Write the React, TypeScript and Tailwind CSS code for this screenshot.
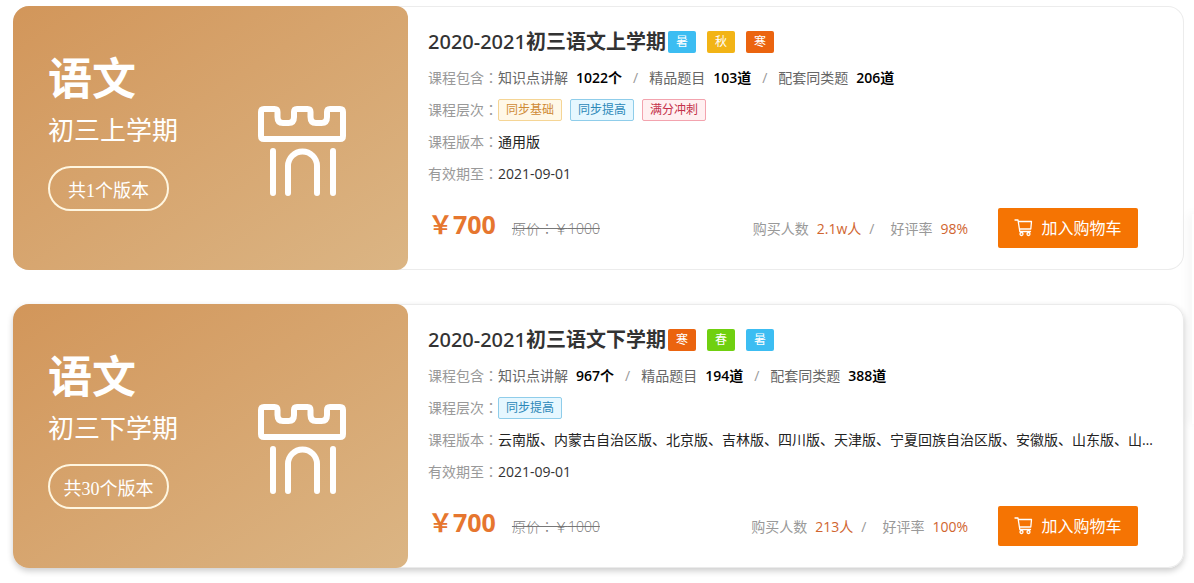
/**
 * @file Course list page
 */

/**
 * Season tag
 */
type Season = "spring" | "summer" | "autumn" | "winter";

/**
 * Course level
 */
type Level = "basic" | "improve" | "sprint";

/**
 * Course
 */
interface Course {
  id: number;
  subject: string;
  term: string;
  versionCount: number;
  year: string;
  title: string;
  seasons: Season[];
  contents: {name: string; count: string}[];
  levels: Level[];
  versions: string;
  expires: string;
  price: number;
  originalPrice: number;
  buyers: string;
  rating: string;
  raised: boolean;
}

/**
 * Season labels and colors
 */
const SEASONS: Record<Season, {label: string; className: string}> = {
  spring: {label: "春", className: "bg-[#70d010]"},
  summer: {label: "暑", className: "bg-[#3cbdf2]"},
  autumn: {label: "秋", className: "bg-[#f2b416]"},
  winter: {label: "寒", className: "bg-[#eb640f]"},
};

/**
 * Level labels and colors
 */
const LEVELS: Record<Level, {label: string; className: string}> = {
  basic: {
    label: "同步基础",
    className: "border-[#f5d595] bg-[#fff8e8] text-[#cf8a35]",
  },
  improve: {
    label: "同步提高",
    className: "border-[#8fcdea] bg-[#e6f7ff] text-[#2b87b8]",
  },
  sprint: {
    label: "满分冲刺",
    className: "border-[#f3a3ae] bg-[#fff0f1] text-[#c4304a]",
  },
};

const COURSES: Course[] = [
  {
    id: 1,
    subject: "语文",
    term: "初三上学期",
    versionCount: 1,
    year: "2020-2021",
    title: "初三语文上学期",
    seasons: ["summer", "autumn", "winter"],
    contents: [
      {name: "知识点讲解", count: "1022个"},
      {name: "精品题目", count: "103道"},
      {name: "配套同类题", count: "206道"},
    ],
    levels: ["basic", "improve", "sprint"],
    versions: "通用版",
    expires: "2021-09-01",
    price: 700,
    originalPrice: 1000,
    buyers: "2.1w人",
    rating: "98%",
    raised: false,
  },
  {
    id: 2,
    subject: "语文",
    term: "初三下学期",
    versionCount: 30,
    year: "2020-2021",
    title: "初三语文下学期",
    seasons: ["winter", "spring", "summer"],
    contents: [
      {name: "知识点讲解", count: "967个"},
      {name: "精品题目", count: "194道"},
      {name: "配套同类题", count: "388道"},
    ],
    levels: ["improve"],
    versions:
      "云南版、内蒙古自治区版、北京版、吉林版、四川版、天津版、宁夏回族自治区版、安徽版、山东版、山西版、广东版",
    expires: "2021-09-01",
    price: 700,
    originalPrice: 1000,
    buyers: "213人",
    rating: "100%",
    raised: true,
  },
];

/**
 * Castle icon
 * @returns JSX
 */
const CastleIcon: React.FC = () => (
  <svg
    className="mt-[26px] h-[90px] w-[88px] shrink-0"
    viewBox="0 0 88 90"
    fill="none"
    stroke="currentColor"
    strokeWidth="6"
    strokeLinecap="round"
    strokeLinejoin="round"
    aria-hidden="true"
  >
    <path d="M6 3H16.500Q19.500 3 19.500 6V11Q19.500 17 25 17H30.500Q36 17 36 11V6Q36 3 39 3H49.500Q52.500 3 52.500 6V11Q52.500 17 58 17H63.500Q69 17 69 11V6Q69 3 72 3H82Q85 3 85 6V30Q85 33 82 33H6Q3 33 3 30V6Q3 3 6 3Z" />
    <path d="M15 45V87M75 45V87M30 87V60A14.500 14.500 0 0 1 59 60V87" />
  </svg>
);

/**
 * Shopping cart icon
 * @returns JSX
 */
const CartIcon: React.FC = () => (
  <svg
    className="h-[18px] w-[19px] shrink-0"
    viewBox="0 0 19 18"
    fill="none"
    stroke="currentColor"
    strokeWidth="1.3"
    strokeLinecap="round"
    strokeLinejoin="round"
    aria-hidden="true"
  >
    <path d="M1 1H4L5.800 12.500H16.500M4.300 2.500H17.500L16.800 10H5.400" />
    <circle cx="7.500" cy="15" r="1.500" />
    <circle cx="14.500" cy="15" r="1.500" />
  </svg>
);

/**
 * Labelled row of a course card
 * @returns JSX
 */
const Row: React.FC<{label: string; children: React.ReactNode}> = ({
  label,
  children,
}) => (
  <div className="flex h-8 items-center">
    <dt className="shrink-0 text-[#999]">
      {label}
      <span className="font-['Noto_Sans_CJK_TC',sans-serif] leading-none">
        ：
      </span>
    </dt>
    <dd className="flex min-w-0 items-center">{children}</dd>
  </div>
);

/**
 * Course card
 * @returns JSX
 */
const CourseCard: React.FC<{course: Course}> = ({course}) => (
  <article
    className={`flex rounded-2xl bg-white ${
      course.raised
        ? "shadow-[inset_0_0_0_1px_#ebebeb,0_3px_6px_rgba(0,0,0,0.2)]"
        : "shadow-[inset_0_0_0_1px_#ececec]"
    }`}
  >
    <div className="flex w-[395px] shrink-0 items-center justify-between rounded-l-2xl rounded-r-xl bg-linear-to-br from-[#d2965a] to-[#dbb584] pr-[62px] pl-[35px] text-white">
      <div className="self-start pt-11">
        <h2 className="text-[44px] leading-[56px] font-bold">
          {course.subject}
        </h2>
        <p className="mt-1 text-[26px] leading-10">{course.term}</p>
        <p className="mt-4 flex h-[45px] w-[121px] items-center justify-center rounded-full border-2 border-[#fff6e0] pt-1 font-['Liberation_Serif','Noto_Sans_CJK_SC',serif] text-lg">
          共{course.versionCount}个版本
        </p>
      </div>
      <CastleIcon />
    </div>

    <div className="min-w-0 flex-1 pt-5 pr-[30px] pb-[22px] pl-5 text-sm">
      <div className="flex h-8 items-center">
        <h3 className="mr-0.5 text-xl leading-8 font-bold text-[#333]">
          <span className="font-['Noto_Sans'] font-medium">{course.year}</span>
          {course.title}
        </h3>
        <div className="flex gap-[11px]">
          {course.seasons.map(season => (
            <span
              key={season}
              className={`flex h-[22px] w-7 items-center justify-center rounded-xs text-xs text-white ${SEASONS[season].className}`}
            >
              {SEASONS[season].label}
            </span>
          ))}
        </div>
      </div>

      <dl className="mt-1">
        <Row label="课程包含">
          {course.contents.map((item, index) => (
            <span key={item.name} className="flex text-[#666]">
              {index > 0 && <span className="mx-[11px] text-[#999]">/</span>}
              {item.name}
              <b className="ml-2 font-semibold text-black">{item.count}</b>
            </span>
          ))}
        </Row>
        <Row label="课程层次">
          <span className="flex gap-2">
            {course.levels.map(level => (
              <span
                key={level}
                className={`flex h-[22px] w-16 items-center justify-center rounded-xs border text-xs ${LEVELS[level].className}`}
              >
                {LEVELS[level].label}
              </span>
            ))}
          </span>
        </Row>
        <Row label="课程版本">
          <span className="truncate text-[#222]">{course.versions}</span>
        </Row>
        <Row label="有效期至">
          <span className="text-[#333]">{course.expires}</span>
        </Row>
      </dl>

      <div className="mt-[18px] flex h-10 items-center">
        <div className="flex items-baseline pb-2">
          <strong className="text-[25px] leading-8 font-bold text-[#e6762f]">
            ￥{course.price}
          </strong>
          <del className="ml-4 font-['Open_Sans','Noto_Sans_CJK_TC',sans-serif] font-light text-[#777]">
            原价：￥{course.originalPrice}
          </del>
        </div>
        <div className="mr-[30px] ml-auto flex pt-0.5 text-[#999]">
          购买人数
          <span className="ml-2 text-[#d0652f]">{course.buyers}</span>
          <span className="mr-4 ml-2">/</span>
          好评率
          <span className="ml-2 text-[#d0652f]">{course.rating}</span>
        </div>
        <button
          type="button"
          className="mr-4 flex h-10 w-[140px] items-center justify-center gap-2 rounded-xs bg-[#f57403] text-base text-white"
        >
          <CartIcon />
          加入购物车
        </button>
      </div>
    </div>
  </article>
);

/**
 * Course list page
 * @returns JSX
 */
export default function App() {
  return (
    <main className="relative flex flex-col gap-[34px] overflow-hidden pt-1.5 pr-2.5 pb-3.5 pl-[13px] font-['Open_Sans','Noto_Sans_CJK_SC',sans-serif]">
      {/* Edge of the floating toolbar */}
      <div className="absolute top-[214px] right-0 h-[210px] w-0.5 bg-white shadow-[0_0_12px_rgba(0,0,0,0.2)]" />
      {COURSES.map(course => (
        <CourseCard key={course.id} course={course} />
      ))}
    </main>
  );
}
